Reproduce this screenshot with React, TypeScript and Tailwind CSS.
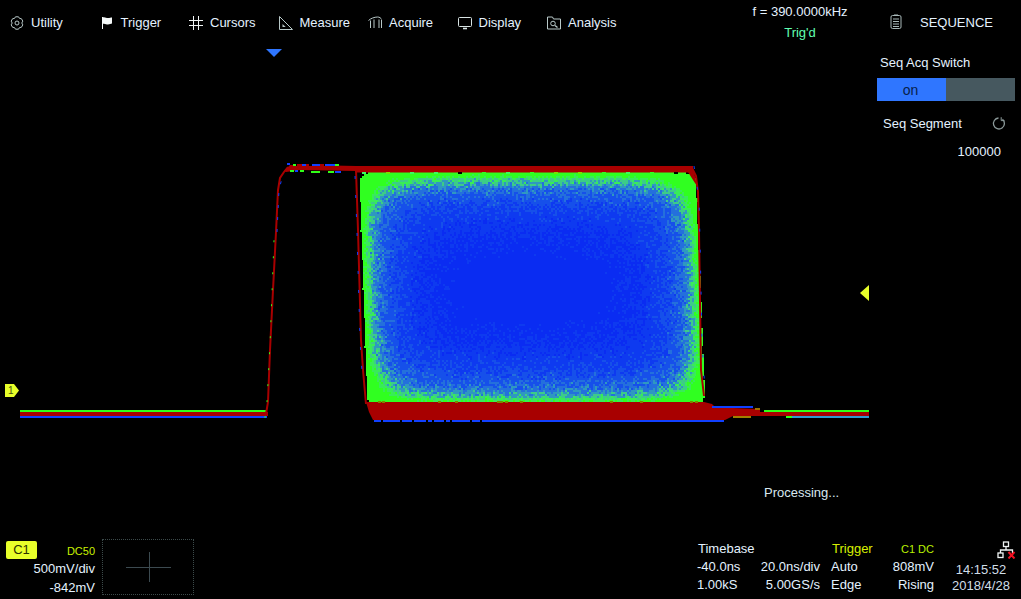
import type { ReactNode } from "react";

// deterministic noise so the persistence display looks the same every run
let seed = 12345;
function rnd() {
  seed = (seed * 1664525 + 1013904223) % 4294967296;
  return seed / 4294967296;
}

const RED = "#a80000";
const GREEN = "#30ff18";
const BLUE = "#1040ff";

const ramp = ["#30ff20", "#38ec58", "#3ccc88", "#2f98c0", "#2470dc", "#1650ea", "#0e3af0", "#0a2cf2"];
const stops = [3, 6, 9, 13, 20, 34, 60];

function buildField() {
  const paths: string[] = ramp.map(() => "");
  const top = 172;
  const bottom = 404;
  for (let y = top; y < bottom; y += 2) {
    const rowNoise = rnd() * 2 - 1;
    const left = 358 + ((y - top) * 8) / 232;
    const right = 695 + ((y - top) * 9) / 232;
    for (let x = Math.floor(left); x < right; x += 2) {
      const dx = Math.min(x - left, right - x);
      const dy = Math.min(y - top, bottom - y);
      const cx = 10 - Math.min(dx, 10);
      const cy = 10 - Math.min(dy, 10);
      if (cx * cx + cy * cy > 100) continue;
      const k = 0.05;
      const base = -Math.log(Math.exp(-k * dx) + Math.exp(-k * dy)) / k;
      const d = base + rowNoise + (rnd() - 0.5) * Math.min(Math.max(base, 0) * 0.7 + 2, 50);
      let idx = stops.findIndex((s) => d < s);
      if (idx < 0) idx = 7;
      paths[idx] += `M${x.toFixed(0)} ${y}h2v2h-2z`;
    }
  }
  return paths;
}

// little coloured pixels that fringe a band
function buildSpeckle(x0: number, x1: number, y: number, colors: string[], step = 3) {
  const out: { x: number; w: number; c: string }[] = [];
  for (let x = x0; x < x1; x += step) {
    out.push({ x, w: step, c: colors[Math.floor(rnd() * colors.length)] });
  }
  return out.map((s) => <rect key={`${y}-${s.x}`} x={s.x} y={y} width={s.w} height={2} fill={s.c} />);
}

const field = buildField();

function Waveform() {
  return (
    <svg width="869" height="488" viewBox="0 46 869 488" className="block">
      <polygon points="266,49 282,49 274,57" fill="#2f76ff" />
      <polygon points="869,285 869,301 860,293" fill="#e8ff2a" />
      <polygon points="5,384 14,384 19,390.5 14,397 5,397" fill="#e8ff2a" />
      <text x="8" y="394" fontSize="10" fill="#46500a" fontFamily="Liberation Sans, sans-serif">1</text>

      {/* left flat trace */}
      <rect x="20" y="410" width="247" height="2" fill={GREEN} />
      <rect x="20" y="412" width="248" height="4" fill={RED} />
      <rect x="20" y="416" width="247" height="2" fill={BLUE} />

      {/* first edge and top shoulder */}
      <polyline points="266,414 268,402 270,350 273,290 276,232 278,190 280,178 284,172 288,167" fill="none" stroke={RED} strokeWidth="2" />
      <polyline points="277,232 279,190 282,178" fill="none" stroke={BLUE} strokeWidth="1" strokeDasharray="3 9" />
      <polyline points="265,418 267,402 270,345 274,240" fill="none" stroke={GREEN} strokeWidth="1" strokeDasharray="2 14" />
      <polygon points="290,165 310,165 356,166 356,171 300,170 286,172 284,171" fill={RED} />
      {buildSpeckle(294, 330, 164, [RED, RED, "#000000"])}
      {[
        [287, 163, 3, BLUE],
        [293, 164, 3, GREEN],
        [302, 164, 4, BLUE],
        [312, 164, 8, BLUE],
        [325, 164, 10, BLUE],
        [335, 164, 4, GREEN],
      ].map(([x, y, w, c]) => (
        <rect key={`t${x}`} x={x as number} y={y as number} width={w as number} height="2" fill={c as string} />
      ))}
      {[
        [290, 170, 4, GREEN],
        [295, 170, 3, BLUE],
        [300, 170, 4, GREEN],
        [311, 171, 9, GREEN],
        [328, 171, 6, GREEN],
        [335, 171, 6, BLUE],
      ].map(([x, y, w, c]) => (
        <rect key={`b${x}`} x={x as number} y={y as number} width={w as number} height="2" fill={c as string} />
      ))}

      {/* persistence block */}
      {field.map((d, i) => (
        <path key={ramp[i]} d={d} fill={ramp[i]} shapeRendering="crispEdges" />
      ))}
      <rect x="355" y="166" width="338" height="6.500" fill={RED} />
      <polyline points="356,170 358,230 361,340 363,370 366,404" fill="none" stroke={RED} strokeWidth="2" />
      <polyline points="692,168 696,176 698,192 699,232 701,370 704,396" fill="none" stroke={RED} strokeWidth="2" />
      <polygon points="688,172 694,172 697,186 693,180" fill={RED} />
      <polyline points="355,176 357,232 360,340 362,372" fill="none" stroke={BLUE} strokeWidth="1" strokeDasharray="3 16" />
      <polyline points="694,166 699,200 700,240 702,340 705,392" fill="none" stroke={BLUE} strokeWidth="1" strokeDasharray="3 18" />
      {buildSpeckle(362, 690, 172, ["#000000", "#30ff20", "#78e000", "#3cf860"], 4).map((r, i) =>
        i % 6 === 0 ? r : null
      )}

      {/* bottom red mass and tail */}
      <polygon points="366,402 704,402 712,404 716,408 733,408 760,409 760,416 733,416 725,420 373,420 369,412" fill={RED} />
      <rect x="374" y="420" width="350" height="2" fill={BLUE} />
      {[381, 400, 412, 426, 432, 444, 450, 470, 480].map((x) => (
        <rect key={x} x={x} y="420" width="2" height="2" fill="#000000" />
      ))}
      {[378, 382, 438, 455, 497, 500, 505, 520, 610, 640, 690, 695].map((x) => (
        <rect key={x} x={x} y="401" width="3" height="2" fill="#7a8a00" />
      ))}
      <rect x="712" y="406" width="41" height="2" fill={BLUE} />
      <rect x="733" y="416" width="18" height="2" fill="#a08000" />
      <rect x="755" y="408" width="5" height="2" fill="#a07000" />
      <rect x="764" y="410" width="105" height="2" fill={GREEN} />
      <rect x="760" y="412" width="109" height="4" fill={RED} />
      <rect x="786" y="416" width="6" height="2" fill={GREEN} />
      <rect x="792" y="416" width="77" height="2" fill="#2f9ad0" />
    </svg>
  );
}

function IconBox({ children }: { children: ReactNode }) {
  return (
    <svg width="14" height="14" viewBox="0 0 14 14" fill="none" stroke="#b8c8c8" strokeWidth="1" className="shrink-0">
      {children}
    </svg>
  );
}

const navItems: { label: string; icon: ReactNode }[] = [
  {
    label: "Utility",
    icon: (
      <IconBox>
        <path d="M5.5 0.8h3l1 1.6 1.9 0.3 1.4 2.4-1 1.9 1 1.9-1.4 2.4-1.9 0.3-1 1.6h-3l-1-1.6-1.9-0.3-1.4-2.4 1-1.9-1-1.9 1.4-2.4 1.9-0.3z" />
        <circle cx="7" cy="7" r="2" />
      </IconBox>
    ),
  },
  {
    label: "Trigger",
    icon: (
      <IconBox>
        <path d="M2 1.500c3-1 4 0.500 6 0.500 1.500 0 3-0.500 4-0.500v6c-1 0-2.500 1-4 1-2 0-3-1.500-6-0.500z" fill="#f4f8f8" stroke="none" />
        <path d="M2.500 1v12" stroke="#f4f8f8" />
      </IconBox>
    ),
  },
  {
    label: "Cursors",
    icon: (
      <IconBox>
        <path d="M4.500 0v14M9.500 0v14M0 4.500h14M0 9.500h14" stroke="#f0f4f4" />
      </IconBox>
    ),
  },
  {
    label: "Measure",
    icon: (
      <IconBox>
        <path d="M0.500 0.500v13h13z" />
        <path d="M3.500 8v3h3.200z" fill="#b8c8c8" stroke="none" />
      </IconBox>
    ),
  },
  {
    label: "Acquire",
    icon: (
      <IconBox>
        <path d="M0.500 4.500c2-2 6-3.500 9-3.500 2 0 3.500 1 4 2.500" />
        <path d="M2.500 12V4.500M6 12V3.500M11 12V3.500M13.500 12V4" />
      </IconBox>
    ),
  },
  {
    label: "Display",
    icon: (
      <IconBox>
        <rect x="0.500" y="1.500" width="13" height="9" rx="1" stroke="#d8e4e4" />
        <path d="M5 12.500h4" stroke="#d8e4e4" strokeWidth="1.600" />
      </IconBox>
    ),
  },
  {
    label: "Analysis",
    icon: (
      <IconBox>
        <path d="M0.500 1h5l1 2h7v10h-13z" />
        <circle cx="6" cy="7.500" r="2.300" />
        <path d="M8 9.500l2.500 2" strokeWidth="1.400" />
      </IconBox>
    ),
  },
];

function NetIcon() {
  return (
    <svg width="19" height="18" viewBox="0 0 19 18" fill="none" stroke="#f0f4f4" strokeWidth="1.300">
      <rect x="6.500" y="1" width="5" height="4.500" />
      <rect x="1" y="12" width="5" height="4.500" />
      <path d="M9 5.500v3.500M3.500 12v-3h12v3" />
      <path d="M11.500 11l6 6.500M17.500 11l-6 6.500" stroke="#f01020" strokeWidth="2" />
    </svg>
  );
}

export default function App() {
  return (
    <div className="relative flex h-[599px] w-[1021px] flex-col overflow-hidden bg-black font-['Liberation_Sans',sans-serif] text-[13px] leading-[18px] text-[#e4f2ff]">
      {/* top menu */}
      <div className="flex h-[46px] shrink-0">
        <div className="flex flex-1 items-start pl-[10px] pt-[14px]">
          {navItems.map((item) => (
            <div key={item.label} className="flex w-[89.5px] items-center gap-[7px]">
              {item.icon}
              <span>{item.label}</span>
            </div>
          ))}
        </div>
        <div className="mr-[22px] flex w-[94px] flex-col items-center pt-[1px] leading-[21px]">
          <span className="whitespace-nowrap">f = 390.0000kHz</span>
          <span className="text-[#60ffb0]">Trig'd</span>
        </div>
        <div className="flex w-[152px] items-start gap-[18px] pl-[21px] pt-[14px]">
          <svg width="12" height="15" viewBox="0 0 12 15" fill="none" stroke="#a8b8b8" strokeWidth="1" className="shrink-0">
            <rect x="1" y="1.500" width="10" height="13" rx="1.500" />
            <path d="M4 1h4M3 5h6M3 7.500h6M3 10h6M3 12.500h6" />
          </svg>
          <span>SEQUENCE</span>
        </div>
      </div>

      {/* waveform grid and side panel */}
      <div className="flex flex-1">
        <div className="relative w-[869px]">
          <Waveform />
          <span className="absolute left-[764px] top-[438px] text-[#d8e8f0]">Processing...</span>
        </div>
        <div className="flex flex-1 flex-col pl-[8px] pr-[6px]">
          <div className="mt-[8px] pl-[3px]">Seq Acq Switch</div>
          <div className="mt-[6px] flex h-[23px]">
            <div className="flex w-[69px] items-center justify-center pr-[2px] text-[14px] bg-[#2f76ff] text-[#08204a]">on</div>
            <div className="flex-1 bg-[#46585f]" />
          </div>
          <div className="mt-[14px] flex items-center justify-between pl-[6px] pr-[9px]">
            <span>Seq Segment</span>
            <svg width="14" height="14" viewBox="0 0 14 14" fill="none" stroke="#8c9a9a" strokeWidth="1.300">
              <path d="M10.500 2.300a5.500 5.500 0 1 1-4-1.300" />
              <path d="M9.200 0.200v3.400h3.200" strokeWidth="1" />
            </svg>
          </div>
          <div className="mt-[10px] pr-[14px] text-right">100000</div>
        </div>
      </div>

      {/* bottom status */}
      <div className="flex h-[65px] shrink-0">
        <div className="ml-[6px] mt-[6px] flex w-[89px] flex-col">
          <div className="flex items-center justify-between">
            <span className="flex h-[18px] w-[31px] items-center justify-center rounded-[2px] bg-[#e8ff2a] text-[#2a3000]">C1</span>
            <span className="pt-[2px] text-[11px] text-[#c8f000]">DC50</span>
          </div>
          <div className="text-right">500mV/div</div>
          <div className="mt-px text-right">-842mV</div>
        </div>
        <div className="relative ml-[7px] mt-[5px] h-[56px] w-[92px] border border-dotted border-[#3c4a4a]">
          <div className="absolute left-[23px] top-[27px] h-px w-[45px] bg-[#3c4a50]" />
          <div className="absolute left-[46px] top-[12px] h-[30px] w-px bg-[#3c4a50]" />
        </div>
        <div className="ml-[503px] mt-[6px] w-[123px]">
          <div className="pl-px">Timebase</div>
          <div className="flex justify-between">
            <span>-40.0ns</span>
            <span>20.0ns/div</span>
          </div>
          <div className="flex justify-between">
            <span>1.00kS</span>
            <span>5.00GS/s</span>
          </div>
        </div>
        <div className="ml-[11px] mt-[6px] w-[103px]">
          <div className="flex items-center justify-between">
            <span className="pl-px text-[#d8f000]">Trigger</span>
            <span className="text-[11px] text-[#b8f000]">C1 DC</span>
          </div>
          <div className="flex justify-between">
            <span>Auto</span>
            <span>808mV</span>
          </div>
          <div className="flex justify-between">
            <span>Edge</span>
            <span>Rising</span>
          </div>
        </div>
        <div className="ml-[18px] mt-[7px] flex flex-1 flex-col items-end pr-[5px]">
          <NetIcon />
          <div className="mr-[6px] mt-[3px] w-[58px] text-center leading-[16px] text-[#d0dee8]">14:15:52</div>
          <div className="mr-[6px] w-[58px] whitespace-nowrap text-center leading-[16px] text-[#d0dee8]">2018/4/28</div>
        </div>
      </div>
    </div>
  );
}
